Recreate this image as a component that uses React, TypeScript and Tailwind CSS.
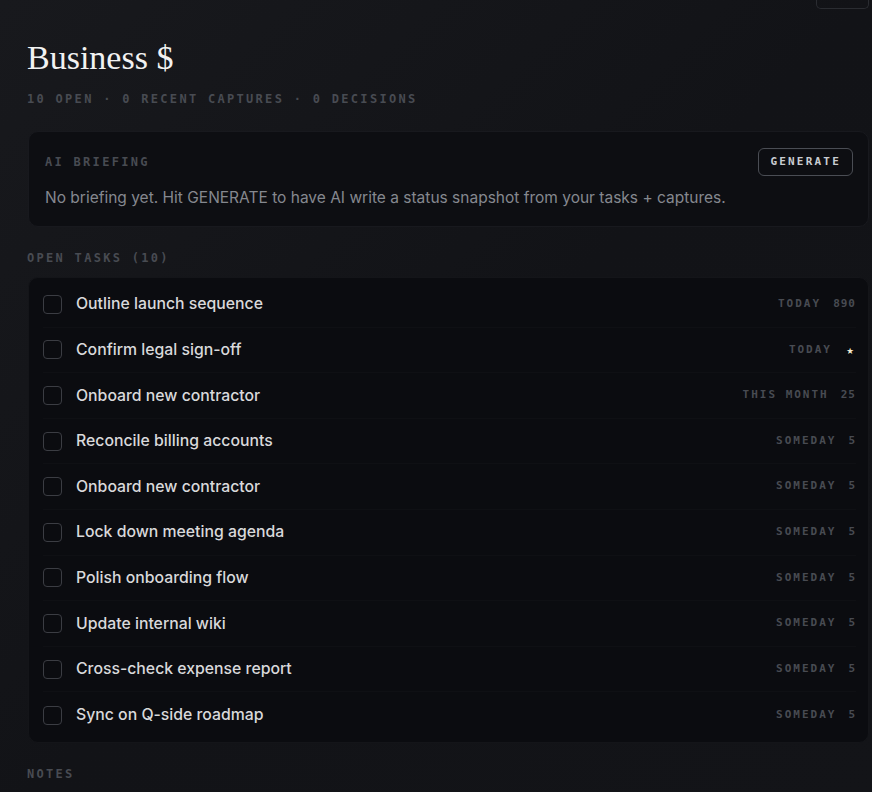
type Task = { title: string; when: string; score?: string; star?: boolean };

const tasks: Task[] = [
  { title: "Outline launch sequence", when: "TODAY", score: "890" },
  { title: "Confirm legal sign-off", when: "TODAY", star: true },
  { title: "Onboard new contractor", when: "THIS MONTH", score: "25" },
  { title: "Reconcile billing accounts", when: "SOMEDAY", score: "5" },
  { title: "Onboard new contractor", when: "SOMEDAY", score: "5" },
  { title: "Lock down meeting agenda", when: "SOMEDAY", score: "5" },
  { title: "Polish onboarding flow", when: "SOMEDAY", score: "5" },
  { title: "Update internal wiki", when: "SOMEDAY", score: "5" },
  { title: "Cross-check expense report", when: "SOMEDAY", score: "5" },
  { title: "Sync on Q-side roadmap", when: "SOMEDAY", score: "5" },
];

const mono = "font-['DejaVu_Sans_Mono',monospace]";
const sans = "font-['Inter','Noto_Sans',sans-serif]";

function Label({ children }: { children: React.ReactNode }) {
  return (
    <div className={`${mono} text-[12px] font-bold leading-4 tracking-[2.3px] text-[#484b52]`}>
      {children}
    </div>
  );
}

export default function App() {
  return (
    <div className="min-h-screen overflow-hidden bg-gradient-to-br from-[#18191d] via-[#121317] to-[#131418] pl-[27px] pr-[3px]">
      <div className="flex h-[9px] justify-end">
        <div className="w-[53px] rounded-b-[5px] border border-t-0 border-[#2a2c31]" />
      </div>

      <h1 className="mt-[29px] font-['Liberation_Serif',serif] text-[34px] leading-[40px] text-[#f2f2f2]">
        Business $
      </h1>

      <div className="mt-[13px]">
        <Label>10 OPEN · 0 RECENT CAPTURES · 0 DECISIONS</Label>
      </div>

      <section className="ml-px mt-[24px] rounded-[10px] border border-[#18191e] bg-[#0d0e12] px-[16px] pb-[18px] pt-[16px]">
        <div className="flex h-[28px] items-center justify-between">
          <Label>AI BRIEFING</Label>
          <button className={`${mono} mr-[-1px] h-[28px] rounded-[6px] border border-[#4a4d54] px-[11px] text-[11px] font-bold tracking-[2.2px] text-[#c9ccd1]`}>
            GENERATE
          </button>
        </div>
        <p className={`${sans} mt-[12px] text-[15.5px] leading-5 text-[#85888f]`}>
          No briefing yet. Hit GENERATE to have AI write a status snapshot from your tasks + captures.
        </p>
      </section>

      <div className="mt-[23px]">
        <Label>OPEN TASKS (10)</Label>
      </div>

      <section className="ml-px mt-[11px] rounded-[10px] border border-[#141519] bg-[#0b0c10] py-[4px] pl-[14px] pr-[12px]">
        {tasks.map((t, i) => (
          <div
            key={i}
            className="flex h-[45.6px] items-center border-b border-[#0f1014] last:border-b-0"
          >
            <div className="h-[19px] w-[19px] shrink-0 rounded-[4px] border-[1.5px] border-[#3b3d43]" />
            <div className={`${sans} ml-[14px] flex-1 text-[15.8px] font-medium text-[#d9d9db]`}>{t.title}</div>
            <div className={`${mono} flex items-center gap-[12px] text-[11px] font-bold tracking-[2px] text-[#484b52]`}>
              <span>{t.when}</span>
              {t.star ? (
                <span className="w-[12px] text-center text-[12px] tracking-normal text-[#f2ead2]">★</span>
              ) : (
                <span className="tracking-[1px]">{t.score}</span>
              )}
            </div>
          </div>
        ))}
      </section>

      <div className="mt-[23px] pb-10">
        <Label>NOTES</Label>
      </div>
    </div>
  );
}
